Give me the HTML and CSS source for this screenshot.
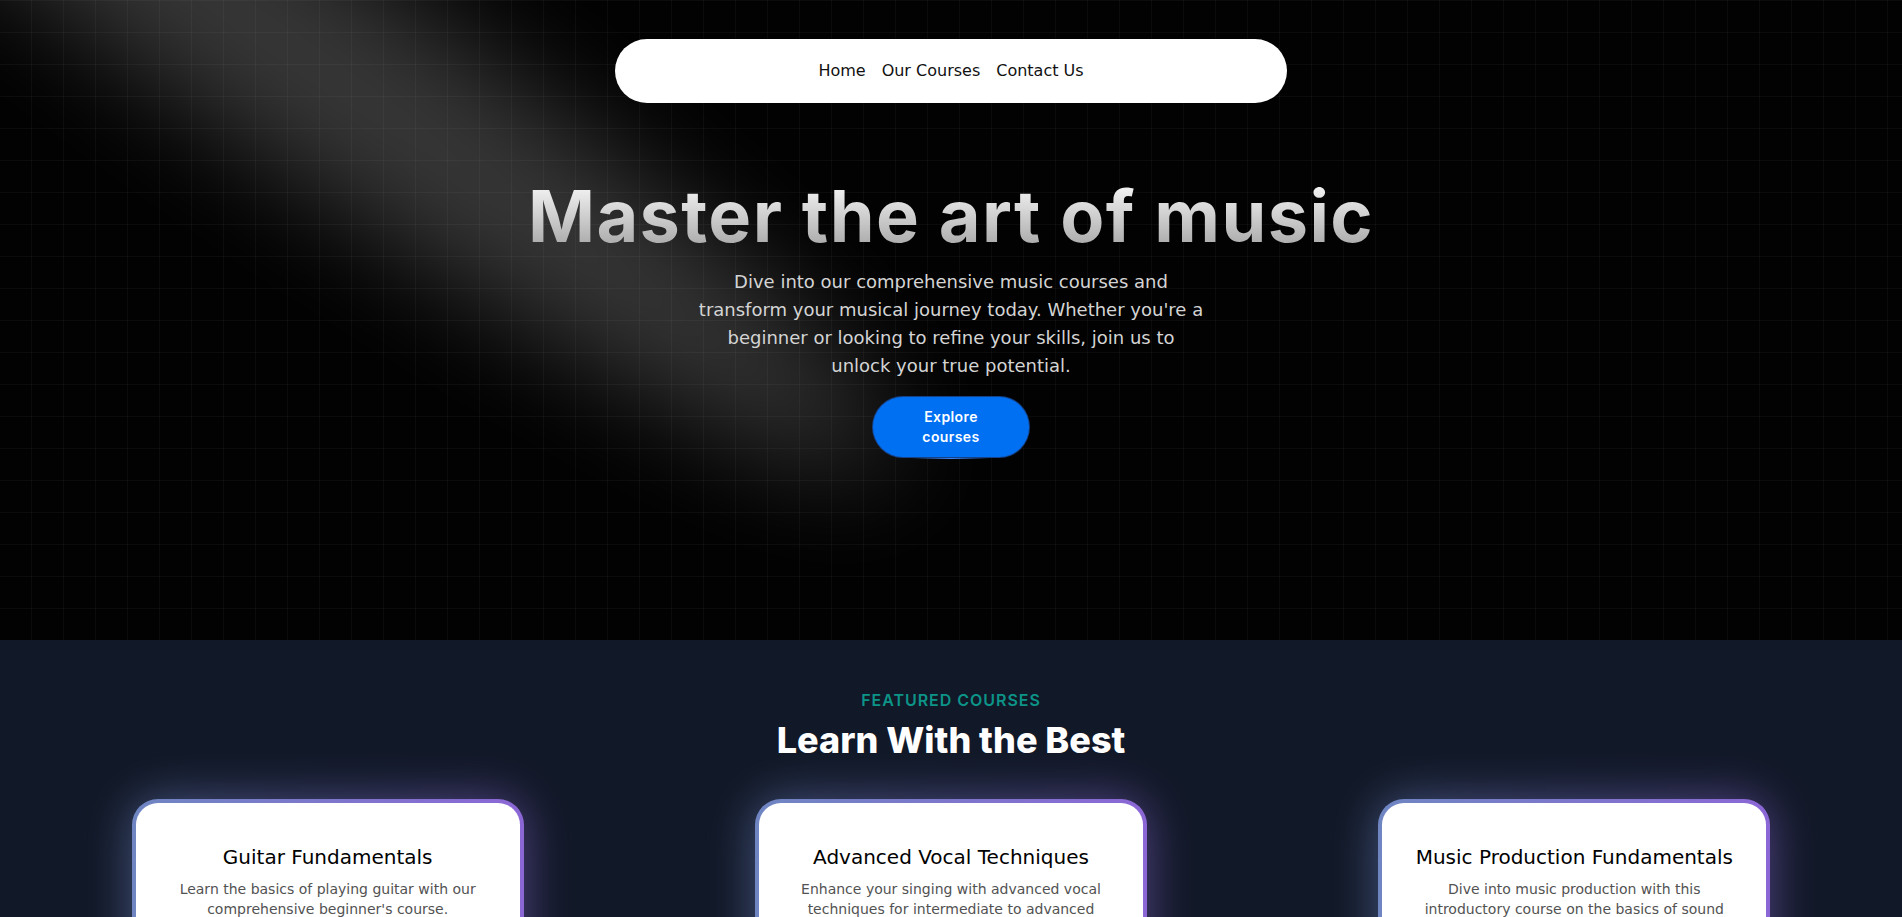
FILE: index.html
```html
<!DOCTYPE html>
<html lang="en">
<head>
<meta charset="utf-8">
<title>Music School</title>
<link rel="stylesheet" href="styles.css">
</head>
<body>
<section class="hero">
  <svg class="spotlight" viewBox="0 0 3787 2842" fill="none" aria-hidden="true">
    <g filter="url(#spot-blur)">
      <ellipse cx="1924.71" cy="273.501" rx="1924.71" ry="273.501" transform="matrix(-0.822377 -0.568943 -0.568943 0.822377 3631.88 2291.09)" fill="white" fill-opacity="0.21"></ellipse>
    </g>
    <defs>
      <filter id="spot-blur" x="0.860352" y="0.838989" width="3785.16" height="2840.26" filterUnits="userSpaceOnUse" color-interpolation-filters="sRGB">
        <feFlood flood-opacity="0" result="BackgroundImageFix"></feFlood>
        <feBlend mode="normal" in="SourceGraphic" in2="BackgroundImageFix" result="shape"></feBlend>
        <feGaussianBlur stdDeviation="151"></feGaussianBlur>
      </filter>
    </defs>
  </svg>

  <nav class="navbar">
    <a class="nav-link" href="#">Home</a>
    <a class="nav-link" href="#">Our Courses</a>
    <a class="nav-link" href="#">Contact Us</a>
  </nav>

  <div class="hero-content">
    <h1 class="hero-title">Master the art of music</h1>
    <p class="hero-text">Dive into our comprehensive music courses and transform your musical journey today. Whether you're a beginner or looking to refine your skills, join us to unlock your true potential.</p>
    <div class="hero-actions">
      <a class="btn-primary" href="#">Explore courses<span class="btn-line"></span></a>
    </div>
  </div>
</section>

<section class="featured">
  <p class="featured-label">Featured Courses</p>
  <h2 class="featured-title">Learn With the Best</h2>

  <div class="course-grid">
    <div class="course-cell">
      <div class="course-card">
        <div class="course-inner">
          <h3 class="course-title">Guitar Fundamentals</h3>
          <p class="course-desc">Learn the basics of playing guitar with our comprehensive beginner's course.</p>
        </div>
      </div>
    </div>
    <div class="course-cell">
      <div class="course-card">
        <div class="course-inner">
          <h3 class="course-title">Advanced Vocal Techniques</h3>
          <p class="course-desc">Enhance your singing with advanced vocal techniques for intermediate to advanced singers.</p>
        </div>
      </div>
    </div>
    <div class="course-cell">
      <div class="course-card">
        <div class="course-inner">
          <h3 class="course-title">Music Production Fundamentals</h3>
          <p class="course-desc">Dive into music production with this introductory course on the basics of sound engineering.</p>
        </div>
      </div>
    </div>
  </div>
</section>
</body>
</html>
```

FILE: styles.css
```css
* { box-sizing: border-box; }

html, body {
  margin: 0;
  padding: 0;
}

body {
  background: #111827;
  font-family: "DejaVu Sans", "Open Sans", sans-serif;
  -webkit-font-smoothing: antialiased;
}

/* ---------- HERO ---------- */
.hero {
  position: relative;
  height: 640px;
  overflow: hidden;
  display: flex;
  align-items: center;
  justify-content: center;
  background-color: #020202;
  background-image:
    linear-gradient(to right, transparent 31px, rgba(255,255,255,0.035) 31px),
    linear-gradient(to bottom, rgba(255,255,255,0.035) 1px, transparent 1px);
  background-size: 32px 32px;
}

.spotlight {
  position: absolute;
  left: 290px;
  top: -60px;
  width: 84%;
  height: 169%;
  transform: translate(-50%, -40%);
  z-index: 1;
  pointer-events: none;
}

.navbar {
  position: absolute;
  top: 39px;
  left: 0;
  right: 0;
  margin: 0 auto;
  width: 672px;
  height: 64px;
  background: #fff;
  border-radius: 9999px;
  display: flex;
  align-items: center;
  justify-content: center;
  gap: 16px;
  z-index: 50;
}

.nav-link {
  font-size: 16px;
  line-height: 24px;
  color: #111;
  text-decoration: none;
}

.hero-content {
  position: relative;
  z-index: 10;
  width: 100%;
  padding: 20px 16px 23px;
  text-align: center;
}

.hero-title {
  margin: 0;
  font-family: Inter, "Open Sans", sans-serif;
  font-size: 72px;
  line-height: 1;
  font-weight: 650;
  letter-spacing: 1.4px;
  background: linear-gradient(to bottom, #fafafa, #a3a3a3);
  -webkit-background-clip: text;
  background-clip: text;
  color: transparent;
}

.hero-text {
  margin: 16px auto 0;
  max-width: 509px;
  font-size: 18px;
  line-height: 28px;
  color: #d4d4d4;
}

.hero-actions {
  margin-top: 17px;
  display: flex;
  justify-content: center;
}

.btn-primary {
  position: relative;
  display: flex;
  align-items: center;
  justify-content: center;
  width: 156px;
  height: 60px;
  padding: 0 34px;
  border-radius: 9999px;
  background: #0070f3;
  box-shadow: 0 0 0 1px rgba(23, 72, 150, 0.9);
  color: #fff;
  font-family: Inter, "Open Sans", sans-serif;
  font-size: 14px;
  line-height: 20px;
  font-weight: 600;
  letter-spacing: 0.4px;
  text-align: center;
  text-decoration: none;
}

.btn-line {
  position: absolute;
  left: 25%;
  width: 50%;
  bottom: -2px;
  height: 1px;
  background: linear-gradient(to right, transparent, #3b82f6, transparent);
}

/* ---------- FEATURED ---------- */
.featured {
  padding: 48px 0 80px;
  background: #111827;
  text-align: center;
}

.featured-label {
  margin: 0;
  font-family: Inter, "Open Sans", sans-serif;
  font-size: 16px;
  line-height: 24px;
  font-weight: 600;
  letter-spacing: 0.06em;
  text-transform: uppercase;
  color: #0d9488;
}

.featured-title {
  margin: 8px 0 0;
  font-family: Inter, "Open Sans", sans-serif;
  font-size: 36px;
  line-height: 40px;
  font-weight: 800;
  color: #fff;
}

.course-grid {
  margin-top: 39px;
  padding: 0 32px;
  display: grid;
  grid-template-columns: repeat(3, 1fr);
  gap: 32px;
}

.course-cell {
  display: flex;
  justify-content: center;
}

.course-card {
  position: relative;
  width: 392px;
  padding: 4px;
  border-radius: 26px;
  background: linear-gradient(to right, #6f86c2, #8c67d6);
}

.course-card::before {
  content: "";
  position: absolute;
  inset: 0;
  border-radius: 26px;
  background: linear-gradient(to right, #6f86c2, #8c67d6);
  filter: blur(24px);
  opacity: 0.55;
  z-index: 0;
}

.course-inner {
  position: relative;
  z-index: 1;
  background: #fff;
  border-radius: 22px;
  padding: 40px 24px;
  min-height: 220px;
}

.course-title {
  margin: 0 0 8px;
  font-size: 20px;
  line-height: 28px;
  font-weight: 400;
  color: #000;
  white-space: nowrap;
}

.course-desc {
  margin: 0;
  font-size: 14px;
  line-height: 20px;
  color: #525252;
}
```
